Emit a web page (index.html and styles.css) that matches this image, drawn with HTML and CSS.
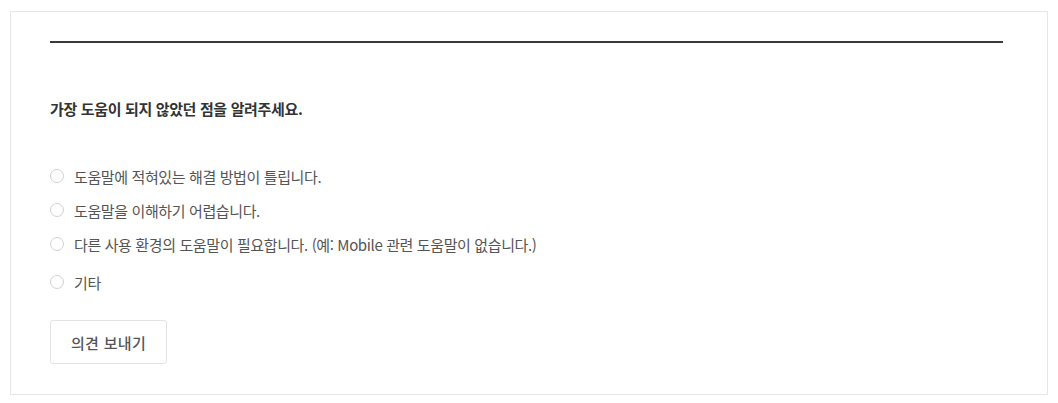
FILE: index.html
```html
<!DOCTYPE html>
<html lang="ko">
<head>
<meta charset="utf-8">
<link rel="stylesheet" href="styles.css">
</head>
<body>
<div class="panel">
  <hr class="rule">
  <p class="question">가장 도움이 되지 않았던 점을 알려주세요.</p>
  <ul class="options">
    <li class="option"><span class="radio"></span><span>도움말에 적혀있는 해결 방법이 틀립니다.</span></li>
    <li class="option"><span class="radio"></span><span>도움말을 이해하기 어렵습니다.</span></li>
    <li class="option"><span class="radio"></span><span>다른 사용 환경의 도움말이 필요합니다. (예: Mobile 관련 도움말이 없습니다.)</span></li>
    <li class="option last"><span class="radio"></span><span>기타</span></li>
  </ul>
  <button class="send">의견 보내기</button>
</div>
</body>
</html>
```
FILE: styles.css
```css
html, body {
  margin: 0;
  padding: 0;
  background: #ffffff;
}
body {
  font-family: "Noto Sans CJK KR", "Noto Sans", sans-serif;
  padding: 11px 10px 0 10px;
}
.panel {
  width: 1038px;
  height: 384px;
  box-sizing: border-box;
  border: 1px solid #e6e6e6;
  padding: 29px 44px 0 39px;
}
.rule {
  margin: 0;
  border: 0;
  height: 2px;
  background: #3a3a3a;
}
.question {
  margin: 56px 0 0 0;
  font-size: 15px;
  font-weight: 700;
  color: #333;
  line-height: 20px;
  letter-spacing: -0.35px;
}
.options {
  list-style: none;
  margin: 47px 0 0 0;
  padding: 0;
  display: flex;
  flex-direction: column;
  gap: 14px;
}
.option {
  display: flex;
  align-items: center;
  height: 20px;
  font-size: 15px;
  color: #555;
  letter-spacing: -0.38px;
}
.option.last {
  margin-top: 4px;
}
.radio {
  width: 12px;
  height: 12px;
  border: 1px solid #d2d2d2;
  border-radius: 50%;
  margin-right: 10px;
  flex: none;
}
.send {
  margin-top: 28px;
  width: 117px;
  height: 44px;
  background: #fff;
  border: 1px solid #e3e3e3;
  border-radius: 3px;
  font-family: inherit;
  font-size: 15px;
  font-weight: 500;
  color: #555;
  letter-spacing: 0.3px;
  padding: 0;
}
```
